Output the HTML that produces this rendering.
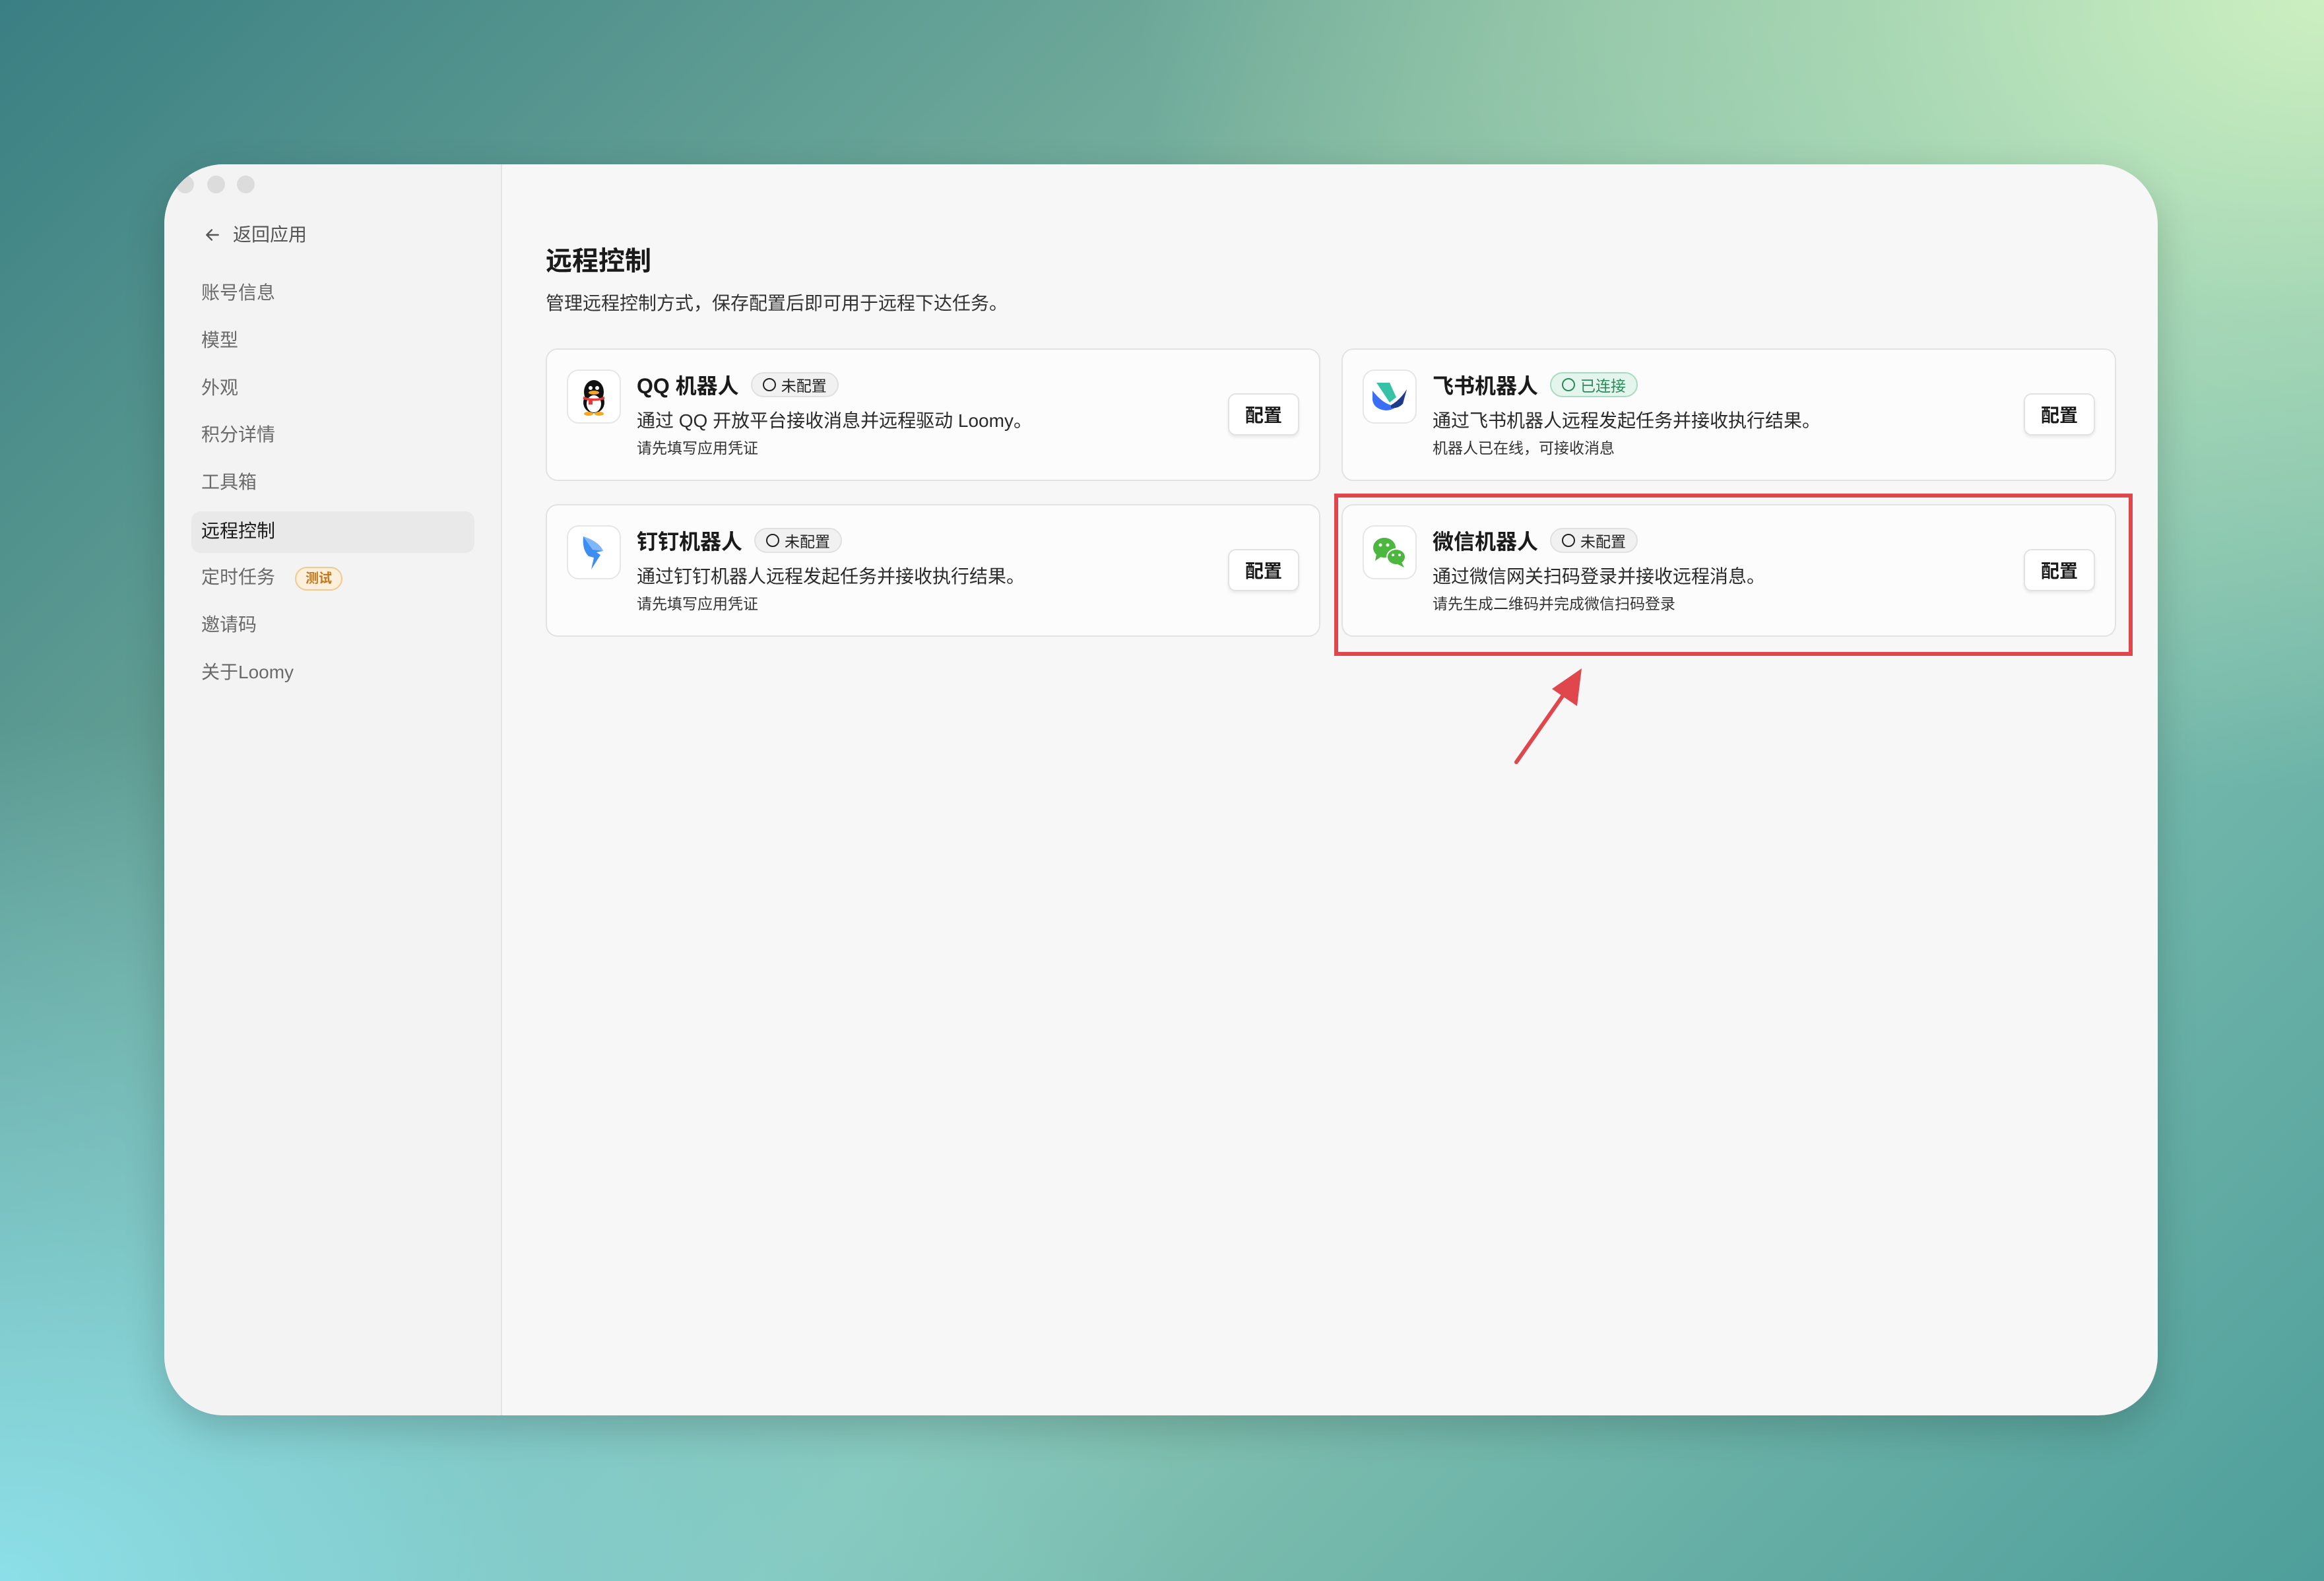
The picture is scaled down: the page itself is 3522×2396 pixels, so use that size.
<!DOCTYPE html>
<html><head><meta charset="utf-8"><style>
*{margin:0;padding:0;box-sizing:border-box}
html,body{width:3522px;height:2396px;overflow:hidden}
body{position:relative;font-family:"Liberation Sans","Noto Sans CJK SC",sans-serif;color:#1f1f1f;
background:
radial-gradient(ellipse 1800px 1200px at 3522px 0px,#ccefc0 0%,rgba(190,230,185,0.6) 40%,rgba(150,200,170,0) 100%),
radial-gradient(ellipse 1800px 1300px at 0px 2396px,#8cdfe8 0%,rgba(130,210,220,0.6) 45%,rgba(120,200,200,0) 100%),
linear-gradient(135deg,#3a7f83 0%,#7db5a0 40%,#88c6b4 60%,#4e9e9b 100%);}
.win{position:absolute;left:249px;top:249px;width:3021px;height:1896px;border-radius:90px;background:#f7f7f7;overflow:hidden;box-shadow:0 20px 60px rgba(0,0,0,0.18)}
.side{position:absolute;left:0;top:0;width:512px;height:100%;background:#f3f3f3;border-right:2px solid #e4e4e4}
.dot{position:absolute;top:17px;width:27px;height:27px;border-radius:50%;background:#dcdcdc}
.nav{position:absolute;left:56px;font-size:28px;color:#6a6a6a;line-height:40px}
.sel{position:absolute;left:41px;top:526px;width:429px;height:63px;border-radius:14px;background:#e9e9e9}
.badge{display:inline-block;vertical-align:middle;margin-left:30px;height:36px;line-height:32px;padding:0 14px;border-radius:18px;background:#fcefdc;border:2px solid #f1c98f;color:#c4761b;font-size:20px;font-weight:bold}
.title{position:absolute;left:578px;top:114px;font-size:40px;font-weight:bold;color:#1a1a1a}
.sub{position:absolute;left:578px;top:189px;font-size:28px;color:#333}
.card{position:absolute;width:1174px;height:201px;border:2px solid #e2e2e2;border-radius:18px;background:#fcfcfc}
.ic{position:absolute;left:30px;top:30px;width:82px;height:82px;border:2px solid #e6e6e6;border-radius:18px;background:#fff;display:flex;align-items:center;justify-content:center}
.name{position:absolute;left:136px;top:30px;font-size:32px;font-weight:600;color:#1a1a1a;white-space:nowrap;display:flex;align-items:center}
.st{display:inline-flex;align-items:center;margin-left:18px;height:38px;padding:0 16px;border-radius:19px;border:2px solid #e0e0e0;background:#f1f1f1;font-size:23px;font-weight:normal;color:#222}
.st i{display:inline-block;width:20px;height:20px;border:2.5px solid #222;border-radius:50%;margin-right:8px}
.st.ok{background:#e3f5ec;border-color:#a8dcc0;color:#2a8a5a}
.desc{position:absolute;left:136px;top:86px;font-size:28px;color:#2a2a2a;white-space:nowrap}
.hint{position:absolute;left:136px;top:130px;font-size:23px;color:#333;white-space:nowrap}
.btn{position:absolute;right:30px;top:66px;width:108px;height:64px;border:2px solid #e2e2e2;border-radius:12px;background:#fff;box-shadow:0 3px 5px rgba(0,0,0,0.08);font-size:28px;font-weight:bold;display:flex;align-items:center;justify-content:center;color:#1a1a1a}
</style></head><body>
<div class="win">
 <div class="side">
  <div class="dot" style="left:18px"></div><div class="dot" style="left:65px"></div><div class="dot" style="left:110px"></div>
  <div class="nav" style="left:60px;top:87px;color:#555">
   <svg width="26" height="26" viewBox="0 0 24 24" style="vertical-align:-4px;margin-right:18px"><path d="M20 12H5M11 5l-7 7 7 7" fill="none" stroke="#555" stroke-width="2.2" stroke-linecap="round" stroke-linejoin="round"/></svg>返回应用</div>
  <div class="nav" style="top:175px">账号信息</div>
  <div class="nav" style="top:247px">模型</div>
  <div class="nav" style="top:319px">外观</div>
  <div class="nav" style="top:390px">积分详情</div>
  <div class="nav" style="top:462px">工具箱</div>
  <div class="sel"></div>
  <div class="nav" style="top:536px;color:#1a1a1a">远程控制</div>
  <div class="nav" style="top:606px">定时任务<span class="badge">测试</span></div>
  <div class="nav" style="top:678px">邀请码</div>
  <div class="nav" style="top:750px">关于Loomy</div>
 </div>
 <div class="title">远程控制</div>
 <div class="sub">管理远程控制方式，保存配置后即可用于远程下达任务。</div>

 <div class="card" style="left:578px;top:279px">
  <div class="ic"><svg width="50" height="58" viewBox="0 0 50 58"><ellipse cx="25" cy="22" rx="15" ry="18" fill="#111"/><ellipse cx="25" cy="38" rx="16" ry="16" fill="#111"/><ellipse cx="25" cy="40" rx="11" ry="13" fill="#fff"/><circle cx="20" cy="16" r="3" fill="#fff"/><circle cx="30" cy="16" r="3" fill="#fff"/><ellipse cx="25" cy="23" rx="8" ry="3" fill="#f5a623"/><path d="M9 29 Q25 35 41 29 L41 33 Q25 38 9 33Z" fill="#e53935"/><rect x="17" y="32" width="6" height="9" fill="#e53935"/><ellipse cx="17" cy="55" rx="7" ry="3" fill="#f5a623"/><ellipse cx="33" cy="55" rx="7" ry="3" fill="#f5a623"/></svg></div>
  <div class="name">QQ 机器人<span class="st"><i></i>未配置</span></div>
  <div class="desc">通过 QQ 开放平台接收消息并远程驱动 Loomy。</div>
  <div class="hint">请先填写应用凭证</div>
  <div class="btn">配置</div>
 </div>

 <div class="card" style="left:1784px;top:279px">
  <div class="ic"><svg width="56" height="50" viewBox="0 0 56 50"><path d="M8 4 L28 4 L38 26 L28 34Z" fill="#36c2a6"/><path d="M2 16 Q16 34 30 38 Q44 30 54 14 Q44 46 22 46 Q4 44 2 30Z" fill="#3a6ff5"/><path d="M30 38 Q44 30 54 14 L48 36 Q40 44 30 42Z" fill="#1f3a8a"/></svg></div>
  <div class="name">飞书机器人<span class="st ok"><i style="border-color:#2a8a5a"></i>已连接</span></div>
  <div class="desc">通过飞书机器人远程发起任务并接收执行结果。</div>
  <div class="hint">机器人已在线，可接收消息</div>
  <div class="btn">配置</div>
 </div>

 <div class="card" style="left:578px;top:515px">
  <div class="ic"><svg width="44" height="56" viewBox="0 0 44 56"><path d="M6 4 Q30 12 36 26 L26 28 L32 32 L18 54 L22 36 L14 34 Q4 24 6 4Z" fill="#3d8ef0"/><path d="M6 4 Q30 12 36 26 L20 24Z" fill="#7fb8f7"/></svg></div>
  <div class="name">钉钉机器人<span class="st"><i></i>未配置</span></div>
  <div class="desc">通过钉钉机器人远程发起任务并接收执行结果。</div>
  <div class="hint">请先填写应用凭证</div>
  <div class="btn">配置</div>
 </div>

 <div class="card" style="left:1784px;top:515px">
  <div class="ic"><svg width="56" height="50" viewBox="0 0 56 50"><ellipse cx="20" cy="18" rx="17" ry="15" fill="#4cb73e"/><path d="M8 28 L6 38 L16 31Z" fill="#4cb73e"/><ellipse cx="38" cy="32" rx="14" ry="12" fill="#4cb73e" stroke="#fff" stroke-width="2"/><path d="M46 40 L50 48 L40 43Z" fill="#4cb73e"/><circle cx="14" cy="14" r="2.5" fill="#fff"/><circle cx="25" cy="14" r="2.5" fill="#fff"/><circle cx="33" cy="29" r="2" fill="#fff"/><circle cx="43" cy="29" r="2" fill="#fff"/></svg></div>
  <div class="name">微信机器人<span class="st"><i></i>未配置</span></div>
  <div class="desc">通过微信网关扫码登录并接收远程消息。</div>
  <div class="hint">请先生成二维码并完成微信扫码登录</div>
  <div class="btn">配置</div>
 </div>
</div>
<svg style="position:absolute;left:0;top:0" width="3522" height="2396">
 <rect x="2025" y="751" width="1204" height="240" fill="none" stroke="#e0474c" stroke-width="6"/>
 <line x1="2298" y1="1155" x2="2375" y2="1045" stroke="#e0474c" stroke-width="6" stroke-linecap="round"/>
 <path d="M2397 1013 L2390 1070 L2352 1044Z" fill="#e0474c"/>
</svg>
</body></html>
